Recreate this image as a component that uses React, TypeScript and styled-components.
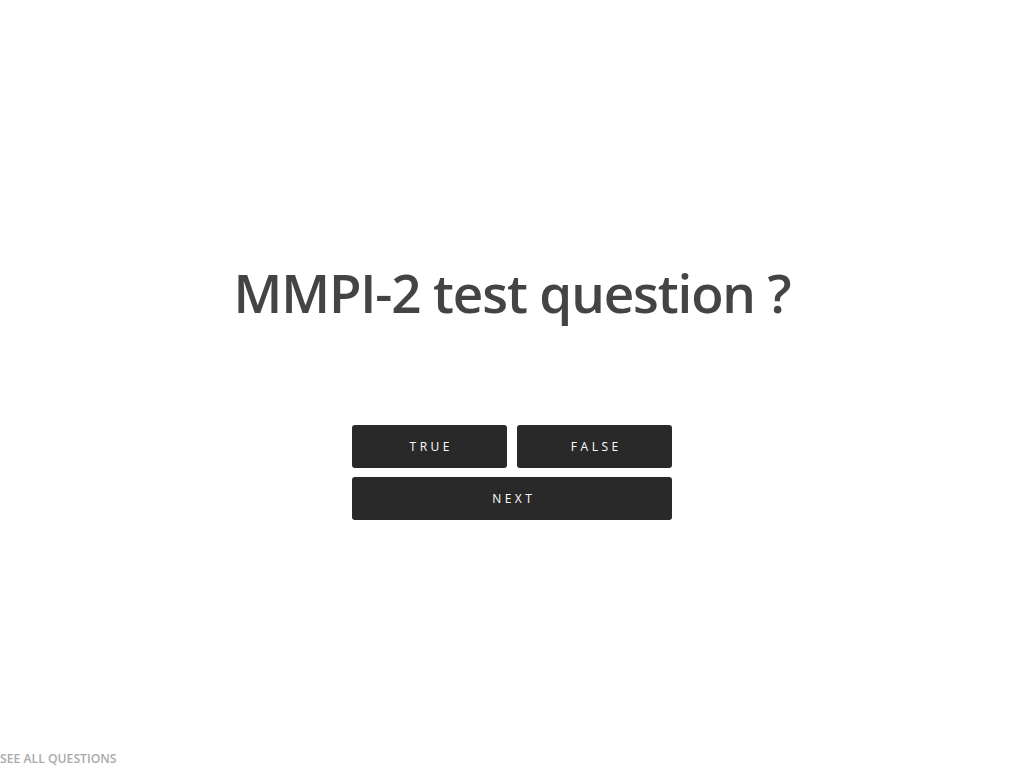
import styled, { createGlobalStyle } from "styled-components";

const GlobalStyle = createGlobalStyle`
    html, body {
        margin: 0;
        padding: 0;
        background: #FFFFFF;
        font-family: 'Open Sans', 'Liberation Sans', sans-serif;
    }
`

const Page = styled.div`
    position: relative;
    height: 768px;
    display: flex;
    flex-direction: column;
    align-items: center;
`

const Question = styled.h1`
    margin: 257px 0 0;
    color: #444444;
    font-weight: 600;
    font-size: 53px;
    line-height: 72px;
    letter-spacing: -1.15px;
    text-align: center;
`

const Answers = styled.div`
    margin-top: 96px;
    width: 320px;
    display: grid;
    grid-template-columns: 1fr 1fr;
    column-gap: 10px;
    row-gap: 9px;
`

const Button = styled.button<{ wide?: boolean }>`
    grid-column: ${props => props.wide ? "1 / span 2" : "auto"};
    height: 43px;
    border: none;
    border-radius: 3px;
    background: #292929;
    color: #FFFFFF;
    font-family: 'Open Sans', 'Liberation Sans', sans-serif;
    font-size: 12px;
    letter-spacing: 3.5px;
    text-transform: uppercase;
    cursor: pointer;
    padding: 0 0 0 3.5px;
`

const SeeAll = styled.a`
    position: absolute;
    left: 0;
    bottom: 1px;
    color: #AAAAAA;
    font-size: 12.2px;
    font-weight: 600;
    text-decoration: none;
    text-transform: uppercase;
`

const App = () => (
    <>
        <GlobalStyle />
        <Page>
            <Question>MMPI-2 test question ?</Question>
            <Answers>
                <Button>True</Button>
                <Button>False</Button>
                <Button wide>Next</Button>
            </Answers>
            <SeeAll href="#">See all questions</SeeAll>
        </Page>
    </>
)

export default App
